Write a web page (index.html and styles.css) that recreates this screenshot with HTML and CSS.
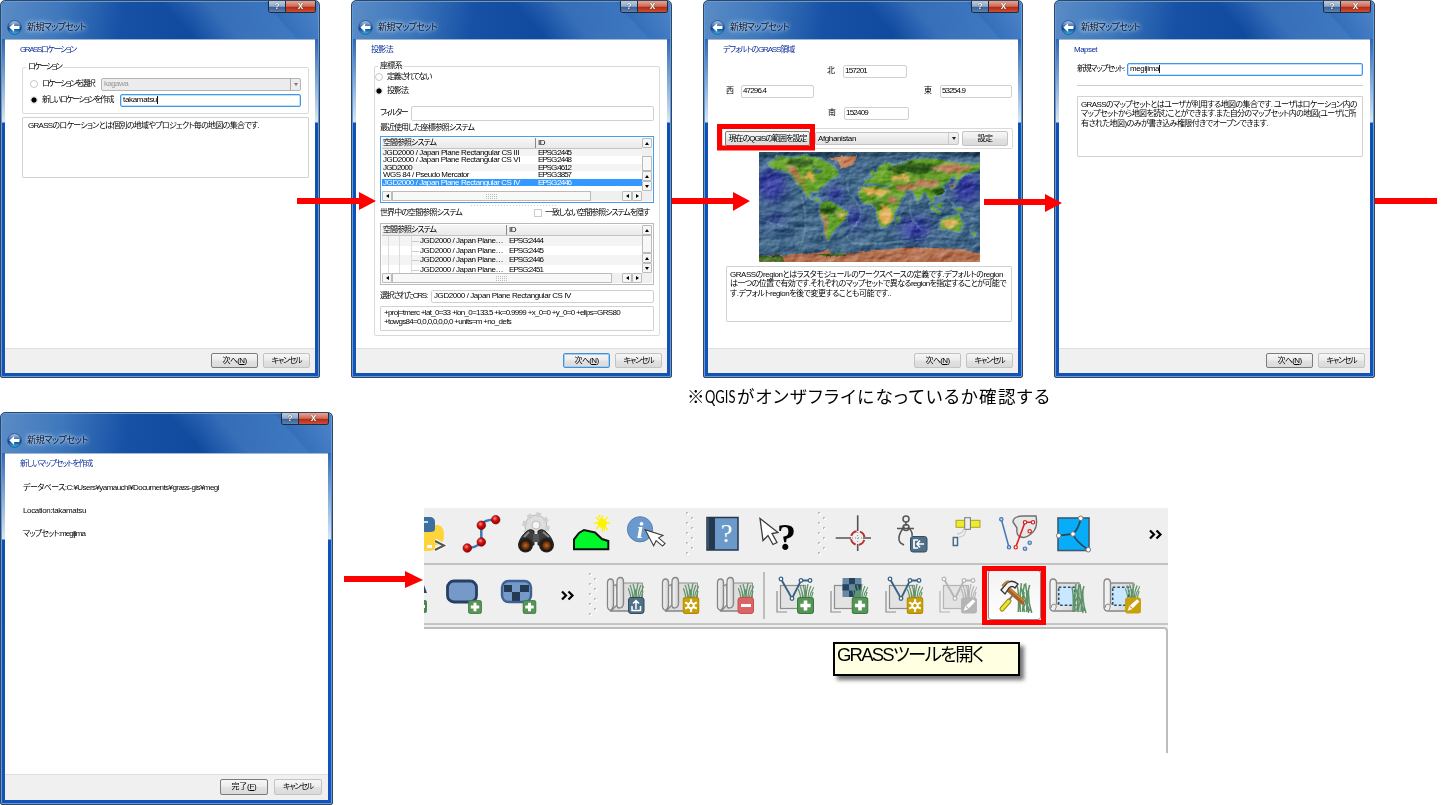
FILE: index.html
```html
<!DOCTYPE html>
<html lang="ja">
<head>
<meta charset="utf-8">
<title>新規マップセット</title>
<link rel="stylesheet" href="styles.css">
</head>
<body>
<svg class="defs" width="0" height="0">
  <defs>
    <linearGradient id="orb" x1="0" y1="0" x2="0" y2="1"><stop offset="0" stop-color="#b9cfe8"/><stop offset=".45" stop-color="#2a62ae"/><stop offset=".55" stop-color="#0b3c8e"/><stop offset="1" stop-color="#35c0ee"/></linearGradient>
    <linearGradient id="paper" x1="0" y1="0" x2="1" y2="0"><stop offset="0" stop-color="#f4f4f4"/><stop offset="1" stop-color="#d2d2d2"/></linearGradient>
    <radialGradient id="ball" cx=".4" cy=".35" r=".7"><stop offset="0" stop-color="#f88"/><stop offset=".45" stop-color="#d20c0c"/><stop offset="1" stop-color="#8a0000"/></radialGradient>
    <radialGradient id="lens"><stop offset="0" stop-color="#b86a25"/><stop offset=".55" stop-color="#7a3508"/><stop offset="1" stop-color="#111"/></radialGradient>
    <symbol id="back" viewBox="0 0 16 16"><circle cx="8" cy="8" r="7.3" fill="url(#orb)" stroke="#173f7c" stroke-width=".7"/><path d="M2.5 8 7.6 3.200V6.400H13.300V9.600H7.600V12.800Z" fill="#fff"/></symbol>
    <symbol id="grass" viewBox="0 0 16 16"><path d="M3 16Q2 8 0 5M5 16Q4 6 2 2M7 16Q7 6 5 1M8 16Q8 8 10 0M10 16Q10 8 13 2M11 16Q12 9 16 3M13 16Q14 11 15 8M6 16L4 8M9 16L7 6" fill="none" stroke="currentColor" stroke-width="1.2"/></symbol>
    <symbol id="reeds" viewBox="0 0 16 30"><path d="M2 29Q3 12 1 4M4 29Q3 14 5 1M6 29Q8 14 5 6M8 29Q5 15 8 2M10 29Q11 14 9 1M12 30Q9 14 13 3M15 30Q11 18 12 6M2 24L8 10M6 28L12 12M13 28L7 12" fill="none" stroke="#5e9367" stroke-width="1.5"/></symbol>
    <symbol id="plus" viewBox="0 0 16 16"><rect x=".5" y=".5" width="15" height="15" rx="2.5" fill="#569556" stroke="#3b7a3e"/><path d="M8 3.2V12.8M3.2 8H12.8" stroke="#fff" stroke-width="3.4"/></symbol>
    <symbol id="spark" viewBox="0 0 16 16"><rect x=".5" y=".5" width="15" height="15" rx="2.5" fill="#c9a00a" stroke="#b08a00"/><path d="M8 2V14M2.5 5 13.5 11M13.5 5 2.5 11" stroke="#fff" stroke-width="2"/><circle cx="8" cy="8" r="3.4" fill="#fff"/><circle cx="8" cy="8" r="1.6" fill="#c9a00a"/></symbol>
    <symbol id="pencil" viewBox="0 0 16 16"><rect x=".5" y=".5" width="15" height="15" rx="2.5" fill="currentColor"/><path d="M3 13 4.5 8.8 11.8 2 14 4.2 7 11.5Z" fill="#fff"/><path d="M5 8.5 7.5 11" stroke="currentColor"/></symbol>
    <symbol id="scroll" viewBox="0 0 40 40"><path d="M15 8H37.5V34H12Z" fill="#ddd" stroke="#8d8d8d"/><path d="M2.5 8Q2.500 4 5.500 4Q8.500 4 8.500 8V29Q9 32 6 35.500Q3 35 2.500 32Z" fill="url(#paper)" stroke="#858585" stroke-width="1.300"/><path d="M8.500 11 12 9V30L6 36H24L27 31" fill="#dedede" stroke="#858585" stroke-width="1.300"/><path d="M12 7Q12 2.500 15.500 2.500Q18.500 2.500 18.500 7V29Q18 33 14 33Q12 33 12 30Z" fill="url(#paper)" stroke="#858585" stroke-width="1.300"/></symbol>
    <symbol id="layers" viewBox="0 0 40 40"><path d="M2 16V37H12" fill="none" stroke="currentColor" stroke-width="1.200"/><rect x="5.500" y="10.500" width="25" height="23" fill="#e3e3e3" stroke="currentColor" stroke-width="1.200"/></symbol>
    <symbol id="vee" viewBox="0 0 40 40"><path d="M6 4 17 23.500 26 5.500H35" fill="none" stroke="currentColor" stroke-width="1.900"/><g fill="#fff" stroke="currentColor" stroke-width="1.300"><circle cx="6" cy="4" r="1.800"/><circle cx="17" cy="23.500" r="1.800"/><circle cx="26" cy="5.500" r="1.800"/><circle cx="35" cy="5.500" r="1.800"/></g></symbol>
    <symbol id="region" viewBox="0 0 40 40"><path d="M8 8H31V33H8Z" fill="#dedede" stroke="#8d8d8d" stroke-width="1.300"/><path d="M2 8Q2 4 5 4Q8.500 4 8.500 8V29L30 30V33L26 36H6Q2 36 2 32Z" fill="url(#paper)" stroke="#858585" stroke-width="1.300"/><path d="M3 33Q3 29 6 29Q10 30 7 35" fill="none" stroke="#858585"/><rect x="10.700" y="12.300" width="16" height="18" fill="#c9e7ff" stroke="#244f70" stroke-width="1.600" stroke-dasharray="2.600 2"/></symbol>
    <symbol id="grip" viewBox="0 0 10 48"><path d="M1 2h3l-3 3zM6 7h3l-3 3zM1 12h3l-3 3zM6 17h3l-3 3zM1 22h3l-3 3zM6 27h3l-3 3zM1 32h3l-3 3zM6 37h3l-3 3zM1 42h3l-3 3z" fill="#bdbdbd"/><path d="M4 2v3h-3zM9 7v3h-3zM4 12v3h-3zM9 17v3h-3zM4 22v3h-3zM9 27v3h-3zM4 32v3h-3zM9 37v3h-3zM4 42v3h-3z" fill="#fff"/></symbol>
    <symbol id="cursor" viewBox="0 0 20 28"><path d="M1 1 4 23 9 18 14 27 18 25 13 16 19 15Z" fill="#fff" stroke="#3a3a3a" stroke-width="1.300"/></symbol>
    <symbol id="more" viewBox="0 0 14 12"><path d="M1 1.500 5 5.500 1 9.500M7.500 1.500 11.500 5.500 7.500 9.500" fill="none" stroke="#000" stroke-width="2.200"/></symbol>
  </defs>
</svg>

<main class="canvas">

<section class="win win-a">
  <div class="controls"><b class="help">?</b><b class="close">x</b></div>
  <header><svg class="orb"><use href="#back"/></svg><span class="t cap" data-w="59">新規マップセット</span></header>
  <div class="body">
    <div class="heading"><span class="t" data-w="56">GRASSロケーション</span></div>
    <div class="group ga">
      <span class="legend"><span class="t" data-w="33">ロケーション</span></span>
      <div class="opt"><i class="radio off"></i><span class="t" data-w="52">ロケーションを選択</span><div class="combo disabled"><span class="t" data-w="24">kagawa</span><i class="drop"></i></div></div>
      <div class="opt"><i class="radio on"></i><span class="t" data-w="71">新しいロケーションを作成</span><div class="field focus new"><span class="t caret" data-w="34">takamatsu</span></div></div>
    </div>
    <div class="note na"><span class="t" data-w="231">GRASSのロケーションとは個別の地域やプロジェクト毎の地図の集合です.</span></div>
  </div>
  <footer><button class="btn dark"><span class="t" data-w="24">次へ(<u>N</u>)</span></button><button class="btn"><span class="t" data-w="30">キャンセル</span></button></footer>
</section>

<section class="win win-b">
  <div class="controls"><b class="help">?</b><b class="close">x</b></div>
  <header><svg class="orb"><use href="#back"/></svg><span class="t cap" data-w="59">新規マップセット</span></header>
  <div class="body">
    <div class="heading"><span class="t" data-w="22">投影法</span></div>
    <div class="group gb">
      <span class="legend"><span class="t" data-w="22">座標系</span></span>
      <div class="opt"><i class="radio off"></i><span class="t" data-w="44">定義されてない</span></div>
      <div class="opt"><i class="radio on"></i><span class="t" data-w="21">投影法</span></div>
      <div class="line filter"><span class="t" data-w="27">フィルター</span><div class="field"></div></div>
      <div class="line"><span class="t" data-w="94">最近使用した座標参照システム</span></div>
      <div class="table recent">
        <div class="cells">
          <div class="row head"><span class="t" data-w="53">空間参照システム</span><span class="t" data-w="7">ID</span></div>
          <div class="row alt"><span class="t" data-w="136">JGD2000 / Japan Plane Rectangular CS III</span><span class="t" data-w="33">EPSG:2445</span></div>
          <div class="row"><span class="t" data-w="137">JGD2000 / Japan Plane Rectangular CS VI</span><span class="t" data-w="33">EPSG:2448</span></div>
          <div class="row alt"><span class="t" data-w="29">JGD2000</span><span class="t" data-w="33">EPSG:4612</span></div>
          <div class="row"><span class="t" data-w="86">WGS 84 / Pseudo Mercator</span><span class="t" data-w="33">EPSG:3857</span></div>
          <div class="row sel"><span class="t" data-w="137">JGD2000 / Japan Plane Rectangular CS IV</span><span class="t" data-w="33">EPSG:2446</span></div>
        </div>
        <div class="vbar"><i class="sb up"></i><i class="gap"></i><i class="thumb"></i><i class="sb up"></i><i class="sb down"></i></div>
        <div class="hbar"><i class="sb left"></i><i class="thumb"></i><i class="gap"></i><i class="sb left"></i><i class="sb right"></i></div>
      </div>
      <div class="splitter"></div>
      <div class="line hide"><span class="t" data-w="82">世界中の空間参照システム</span><i class="check"></i><span class="t" data-w="104">一致しない空間参照システムを隠す</span></div>
      <div class="table world">
        <div class="cells">
          <div class="row head"><span class="t" data-w="53">空間参照システム</span><span class="t" data-w="7">ID</span></div>
          <div class="row alt tree"><span class="t" data-w="83">JGD2000 / Japan Plane…</span><span class="t" data-w="34">EPSG:2444</span></div>
          <div class="row tree"><span class="t" data-w="83">JGD2000 / Japan Plane…</span><span class="t" data-w="34">EPSG:2445</span></div>
          <div class="row alt tree"><span class="t" data-w="83">JGD2000 / Japan Plane…</span><span class="t" data-w="34">EPSG:2446</span></div>
          <div class="row tree"><span class="t" data-w="83">JGD2000 / Japan Plane…</span><span class="t" data-w="34">EPSG:2451</span></div>
        </div>
        <div class="vbar"><i class="sb up"></i><i class="thumb"></i><i class="sb up"></i><i class="sb down"></i></div>
        <div class="hbar"><i class="sb left"></i><i class="thumb"></i><i class="gap"></i><i class="sb left"></i><i class="sb right"></i></div>
      </div>
      <div class="line crs"><span class="t" data-w="47">選択されたCRS:</span><div class="field"><span class="t" data-w="137">JGD2000 / Japan Plane Rectangular CS IV</span></div></div>
      <div class="note nb"><span class="t" data-w="236">+proj=tmerc +lat_0=33 +lon_0=133.5 +k=0.9999 +x_0=0 +y_0=0 +ellps=GRS80</span><span class="t" data-w="127">+towgs84=0,0,0,0,0,0,0 +units=m +no_defs</span></div>
    </div>
  </div>
  <footer><button class="btn blue"><span class="t" data-w="24">次へ(<u>N</u>)</span></button><button class="btn"><span class="t" data-w="30">キャンセル</span></button></footer>
</section>

<section class="win win-c">
  <div class="controls"><b class="help">?</b><b class="close">x</b></div>
  <header><svg class="orb"><use href="#back"/></svg><span class="t cap" data-w="59">新規マップセット</span></header>
  <div class="body">
    <div class="heading"><span class="t" data-w="71">デフォルトのGRASS領域</span></div>
    <div class="compass north"><span>北</span><div class="field"><span class="t" data-w="22">157201</span></div></div>
    <div class="compass west"><span>西</span><div class="field"><span class="t" data-w="23">47296.4</span></div><span>東</span><div class="field"><span class="t" data-w="23">53254.9</span></div></div>
    <div class="compass south"><span>南</span><div class="field"><span class="t" data-w="22">152409</span></div></div>
    <div class="group gc">
      <button class="btn dark wide"><span class="t" data-w="78">現在のQGISの範囲を設定</span></button>
      <div class="combo"><span class="t" data-w="38">Afghanistan</span><i class="drop"></i></div>
      <button class="btn"><span class="t" data-w="15">設定</span></button>
    </div>
    <svg class="map" viewBox="193 97 662 329" preserveAspectRatio="none">
      <defs>
        <filter id="relief" x="0" y="0" width="1" height="1" color-interpolation-filters="sRGB"><feTurbulence type="fractalNoise" baseFrequency=".018 .03" numOctaves="4" seed="8"/><feDiffuseLighting surfaceScale="7" lighting-color="#fff"><feDistantLight azimuth="225" elevation="36"/></feDiffuseLighting></filter>
        <filter id="edge"><feTurbulence type="fractalNoise" baseFrequency=".07" numOctaves="2" seed="3" result="n"/><feDisplacementMap in="SourceGraphic" in2="n" scale="9" xChannelSelector="R" yChannelSelector="G"/></filter>
        <filter id="soft"><feTurbulence type="fractalNoise" baseFrequency=".06" numOctaves="2" seed="5" result="n"/><feDisplacementMap in="SourceGraphic" in2="n" scale="30" xChannelSelector="R" yChannelSelector="G"/><feGaussianBlur stdDeviation="2.500"/></filter>
        <filter id="haze" x="-.2" y="-.2" width="1.400" height="1.400"><feGaussianBlur stdDeviation="16"/></filter>
        <clipPath id="land"><path id="landpath" d="M222 130 250 112 290 115 330 108 370 115 400 130 425 150 430 168 400 182 385 200 370 205 368 222 350 213 342 225 352 236 365 232 380 250 362 242 335 227 320 205 300 180 285 160 260 150 235 150ZM378 252 400 243 430 258 460 277 452 300 432 315 415 335 402 360 390 352 388 310 374 275ZM497 205 530 197 560 200 590 208 603 238 622 238 602 270 597 295 580 318 560 323 548 300 545 265 530 252 505 248 493 230ZM510 192 512 180 530 176 545 158 556 138 575 128 600 138 660 118 720 118 790 130 853 133 855 148 805 165 790 185 775 168 758 188 742 195 750 215 730 228 715 230 715 252 700 232 688 215 668 246 655 215 638 210 626 232 605 238 588 208 580 195 560 198 540 190ZM737 302 760 290 772 293 790 283 803 312 795 335 770 330 735 325ZM604 296 614 288 612 304 605 308ZM527 152 534 150 538 166 530 168ZM768 200 780 190 786 178 790 182 782 196 772 206ZM703 248 720 268 735 276 732 280 712 270ZM725 250 742 248 742 264 728 262ZM772 260 800 265 812 276 790 274ZM830 335 846 340 835 352Z"/></clipPath>
      </defs>
      <rect x="193" y="97" width="662" height="329" fill="#375c7e"/>
      <g filter="url(#haze)" fill="#2a2c9c" opacity=".85"><ellipse cx="230" cy="195" rx="45" ry="50"/><ellipse cx="420" cy="225" rx="28" ry="25"/><ellipse cx="480" cy="295" rx="22" ry="35"/><ellipse cx="815" cy="205" rx="42" ry="48"/><ellipse cx="660" cy="325" rx="45" ry="35"/><ellipse cx="240" cy="300" rx="40" ry="25" opacity=".5"/></g>
      <g filter="url(#edge)" fill="none" stroke="#6796ae" stroke-width="6" opacity=".4"><path d="M470 150Q440 200 480 240T470 330 560 370 700 350 810 360M650 230Q630 290 680 330M320 230Q350 320 310 390M193 300Q280 330 380 330M755 230Q800 290 850 300"/></g>
      <path d="M193 97H855V108Q700 100 500 112T193 108Z" fill="#26475c" filter="url(#edge)"/>
      <use href="#landpath" fill="none" stroke="#5a8ca5" stroke-width="10" filter="url(#edge)" opacity=".6"/>
      <g filter="url(#edge)"><use href="#landpath" fill="#5b9a24"/>
        <g clip-path="url(#land)"><g filter="url(#soft)">
          <g fill="#255314"><ellipse cx="320" cy="130" rx="40" ry="12"/><ellipse cx="405" cy="270" rx="24" ry="16"/><ellipse cx="660" cy="145" rx="85" ry="17"/><ellipse cx="550" cy="250" rx="20" ry="7"/><ellipse cx="735" cy="215" rx="20" ry="12"/></g>
          <g fill="#e0a850"><ellipse cx="345" cy="170" rx="17" ry="12"/><ellipse cx="545" cy="215" rx="45" ry="8"/><ellipse cx="575" cy="285" rx="18" ry="32"/><ellipse cx="440" cy="288" rx="13" ry="10"/><ellipse cx="765" cy="310" rx="25" ry="9"/><ellipse cx="620" cy="175" rx="32" ry="8"/></g>
          <g fill="#b27250"><path d="M270 130 305 150 340 220 315 195 285 160ZM378 270 395 300 397 357 386 355Z"/><ellipse cx="688" cy="192" rx="42" ry="14"/><ellipse cx="630" cy="202" rx="32" ry="10"/><ellipse cx="770" cy="145" rx="60" ry="12"/><ellipse cx="593" cy="237" rx="11" ry="13"/></g>
        </g></g>
        <path d="M398 118 440 110 487 110 478 130 455 143 440 147 430 125Z" fill="#c07a55"/>
        <path d="M193 408 290 403 380 398 400 385 410 402 480 400 550 390 640 383 720 384 800 387 860 403V430H190Z" fill="#ad6846"/><path d="M193 408 260 408 270 425H193ZM365 403 440 400 460 407 390 408Z" fill="#375d1c"/>
      </g>
      <ellipse cx="368" cy="153" rx="13" ry="8" fill="#466f85" filter="url(#edge)"/>
      <rect class="shade" x="193" y="97" width="662" height="329" filter="url(#relief)"/>
      <rect x="769" y="196" width="6" height="6" fill="red"/>
    </svg>
    <div class="note nc"><span class="t" data-w="273">GRASSのregionとはラスタモジュールのワークスペースの定義です.デフォルトのregion</span><span class="t" data-w="276">は一つの位置で有効です.それぞれのマップセットで異なるregionを指定することが可能で</span><span class="t" data-w="161">す.デフォルトregionを後で変更することも可能です..</span></div>
  </div>
  <footer><button class="btn"><span class="t" data-w="24">次へ(<u>N</u>)</span></button><button class="btn"><span class="t" data-w="30">キャンセル</span></button></footer>
</section>

<section class="win win-d">
  <div class="controls"><b class="help">?</b><b class="close">x</b></div>
  <header><svg class="orb"><use href="#back"/></svg><span class="t cap" data-w="59">新規マップセット</span></header>
  <div class="body">
    <div class="heading"><span class="t" data-w="23">Mapset</span></div>
    <div class="mapset"><span class="t" data-w="47">新規マップセット:</span><div class="field focus"><span class="t caret" data-w="29">megijima</span></div></div>
    <div class="rule"></div>
    <div class="note nd"><span class="t" data-w="276">GRASSのマップセットとはユーザが利用する地図の集合です. ユーザはロケーション内の</span><span class="t" data-w="275">マップセットから地図を読むことができます.また自分のマップセット内の地図(ユーザに所</span><span class="t" data-w="187">有された地図)のみが書き込み権限付きでオープンできます.</span></div>
  </div>
  <footer><button class="btn dark"><span class="t" data-w="24">次へ(<u>N</u>)</span></button><button class="btn"><span class="t" data-w="30">キャンセル</span></button></footer>
</section>

<section class="win win-e">
  <div class="controls"><b class="help">?</b><b class="close">x</b></div>
  <header><svg class="orb"><use href="#back"/></svg><span class="t cap" data-w="61">新規マップセット</span></header>
  <div class="body">
    <div class="heading"><span class="t" data-w="72">新しいマップセットを作成</span></div>
    <div class="summary"><span class="t" data-w="196">データベース:C:¥Users¥yamauchi¥Documents¥grass-gis¥megi</span></div>
    <div class="summary"><span class="t" data-w="63">Location:takamatsu</span></div>
    <div class="summary"><span class="t" data-w="62">マップセット:megijima</span></div>
  </div>
  <footer><button class="btn dark"><span class="t" data-w="25">完了(<u>F</u>)</span></button><button class="btn"><span class="t" data-w="30">キャンセル</span></button></footer>
</section>

<p class="remark"><span class="t" data-w="18">※</span><span class="latin">QGIS</span><span class="t" data-w="314">がオンザフライになっているか確認する</span></p>

<section class="qgis">
  <div class="bar bar1">
    <svg class="ic cut" viewBox="0 0 31 40"><path d="M0 11H14Q20 12 20 21Q20 31 14 31H11V35Q10 37 0 37Z" fill="#ffd43b"/><path d="M0 3H7Q11 4 11 8V15Q11 18 6 18H0Z" fill="#3a6f9f"/><path d="M0 8H4" stroke="#fff" stroke-width="1.500"/><rect x="3" y="31" width="5" height="3" fill="#fff"/><path d="M11 26.500 20 31.500 11 36.500" fill="none" stroke="#fff" stroke-width="4"/><path d="M11 27 20 31.500 11 36" fill="none" stroke="#555" stroke-width="2"/></svg>
    <svg class="ic" viewBox="0 0 40 40"><path d="M5.300 34Q14 34 19.300 28V11.300Q22 5 33.700 5.700" fill="none" stroke="#3d78bd" stroke-width="2.500"/><g fill="url(#ball)" stroke="#700" stroke-width=".6"><circle cx="5.300" cy="34" r="4.300"/><circle cx="19.300" cy="28" r="4.300"/><circle cx="19.300" cy="11.300" r="4.300"/><circle cx="33.700" cy="5.700" r="4.300"/></g></svg>
    <svg class="ic" viewBox="0 0 40 40"><circle cx="20" cy="12" r="11" fill="#dedede" stroke="#bbb"/><circle cx="20" cy="12" r="11.500" fill="none" stroke="#d0d0d0" stroke-width="4.500" stroke-dasharray="4.600 4.400"/><circle cx="20" cy="11" r="4" fill="#f5f5f5" stroke="#bbb"/><path d="M10 18Q14 14 18 17V31H3Q3 24 10 18ZM30 18Q26 14 22 17V31H37Q37 24 30 18Z" fill="#3d3d3d" stroke="#222"/><path d="M17 20H23V28H17Z" fill="#555"/><path d="M8 23 13 18M27 18 33 23" stroke="#888" stroke-width="2"/><circle cx="9.500" cy="31" r="7.500" fill="#222"/><circle cx="30.500" cy="31" r="7.500" fill="#222"/><circle cx="9.500" cy="31.500" r="5.500" fill="url(#lens)"/><circle cx="30.500" cy="31.500" r="5.500" fill="url(#lens)"/></svg>
    <svg class="ic" viewBox="0 0 40 40"><path d="M3 35.300V25.300L8 19 13 16 24 18.500 31 25 37.300 27V35.300Z" fill="#00f72a" stroke="#111" stroke-width="2"/><circle cx="31.300" cy="9.300" r="4.500" fill="#fff200"/><path d="M31.300 1V18M23 9H39M25 3 37 16M37 3 25 15M28 1 34 17" stroke="#fff200" stroke-width="1.300"/></svg>
    <svg class="ic" viewBox="0 0 40 40"><circle cx="15" cy="15.300" r="12.600" fill="#6a99cd" stroke="#5582b5"/><text x="15" y="23.500" text-anchor="middle" class="info">i</text><use href="#cursor" x="18" y="15" width="20" height="23" transform="rotate(-20 20 17)"/></svg>
    <svg class="grip"><use href="#grip"/></svg>
    <svg class="ic" viewBox="0 0 40 40"><rect x="5" y="3.500" width="31" height="32.500" fill="#6b9aca" stroke="#24394d" stroke-width="1.500"/><rect x="5" y="3.500" width="8" height="32.500" fill="#24394d"/><path d="M6 4V35" stroke="#486887"/><text x="24.500" y="27.500" text-anchor="middle" class="bookq">?</text></svg>
    <svg class="ic" viewBox="0 0 40 40"><use href="#cursor" x="2" y="3" width="20" height="29"/><text x="29.500" y="36" text-anchor="middle" class="bigq">?</text></svg>
    <svg class="grip"><use href="#grip"/></svg>
    <svg class="ic" viewBox="0 0 40 40"><path d="M1.700 24H17M29 24H37M23.700 1.300V17M23.700 30V37" stroke="#555" stroke-width="1.600"/><path d="M18 24H30M23.700 18V30" stroke="#888" stroke-dasharray="1 2"/><circle cx="23.700" cy="24" r="6.800" fill="none" stroke="#b73434" stroke-width="2" stroke-dasharray="7.300 3.400" stroke-dashoffset="-2"/></svg>
    <svg class="ic" viewBox="0 0 40 40"><g fill="none" stroke="#555" stroke-width="1.500"><circle cx="14" cy="5" r="3"/><path d="M14 8V12M5 14.500H22M12.500 12.500Q4 23 8.500 29L12 31M16 13Q21 18 20 22"/><circle cx="14" cy="13.500" r="3"/></g><rect x="18.500" y="22.500" width="16.500" height="15.500" rx="2.500" fill="#4f7088" stroke="#334b5d"/><path d="M26 26H22V34H26M32 30H25M28 26.500 25 30 28 33.500" fill="none" stroke="#fff" stroke-width="1.700"/></svg>
    <svg class="ic" viewBox="0 0 40 40"><rect x="9" y="6.300" width="24" height="7" fill="#ecec2a" stroke="#aaa32e"/><rect x="17.700" y="3.700" width="5.700" height="11.600" fill="#eee" stroke="#777"/><path d="M17 14Q16 20 10 20M19 16Q18 23 12 23" fill="none" stroke="#ccc" stroke-width="1.300"/><rect x="6.300" y="23.500" width="4.200" height="8" fill="#eef4f8" stroke="#456d88" stroke-width="1.500"/></svg>
    <svg class="ic" viewBox="0 0 40 40"><path d="M14 8Q14 2 25 2H37Q39 13 34 18Q27 25 22 23Q17 22 18 14Z" fill="#e7e7e7" stroke="#6e6e6e" stroke-width="1.400"/><path d="M2.300 5.300 10 33.300" stroke="#4677b5" stroke-width="1.500"/><path d="M16.700 33.300 26 8.300H34" fill="none" stroke="#dd2020" stroke-width="1.600"/><g fill="#fff" stroke="#dd2020" stroke-width="1.200"><circle cx="16.700" cy="33.300" r="1.700"/><circle cx="26" cy="8.300" r="1.700"/><circle cx="34" cy="8.300" r="1.700"/><circle cx="30.700" cy="17.300" r="1.700"/></g><g fill="#bdd4f2" stroke="#4677b5" stroke-width="1.200"><circle cx="2.300" cy="5.300" r="1.700"/><circle cx="10" cy="33.300" r="1.700"/><circle cx="30.700" cy="28.700" r="1.700"/><circle cx="26" cy="34.700" r="1.700"/></g></svg>
    <svg class="ic" viewBox="0 0 40 40"><rect x="4" y="4" width="31" height="32.500" fill="#08adfa" stroke="#3d5a72" stroke-width="1.600"/><path d="M26.700 4.300Q25 14 19 20L4.700 21.700M19 20Q22 28 34.300 35.700" fill="none" stroke="#26475e" stroke-width="1.800"/><g fill="#fff" stroke="#777"><circle cx="26.700" cy="4.300" r="2.300"/><circle cx="19" cy="20" r="2.300"/><circle cx="4.700" cy="21.700" r="2.300"/><circle cx="34.300" cy="35.700" r="2.300"/></g></svg>
    <svg class="more end"><use href="#more"/></svg>
  </div>
  <div class="bar bar2">
    <svg class="ic cut" viewBox="0 0 14 40"><path d="M0 10 3 18H0Z" fill="#27476b"/><path d="M0 25H1Q3 25 3 28V36Q3 38 0 38Z" fill="#4a884c"/><path d="M0 31.500H1" stroke="#fff" stroke-width="3"/></svg>
    <svg class="ic" viewBox="0 0 40 40"><rect x="3.500" y="6" width="29" height="21" rx="6.500" fill="#7599c9" stroke="#263f63" stroke-width="2.800"/><use href="#plus" x="24" y="25" width="14" height="14"/></svg>
    <svg class="ic" viewBox="0 0 40 40"><rect x="4" y="6" width="29" height="21" rx="6.500" fill="#7599c9"/><path d="M6 10H14V17H6ZM22 10H31V17H22ZM14 17H22V26H14Z" fill="#243954"/><rect x="4" y="6" width="29" height="21" rx="6.500" fill="none" stroke="#3d6193" stroke-width="2.400"/><use href="#plus" x="24.500" y="25" width="14" height="14"/></svg>
    <svg class="more"><use href="#more"/></svg>
    <svg class="grip"><use href="#grip"/></svg>
    <svg class="ic green" viewBox="0 0 40 40"><use href="#scroll"/><use href="#grass" x="23" y="8" width="16" height="16"/><rect x="23.500" y="22.500" width="15.500" height="16" rx="2.500" fill="#4f7088" stroke="#334b5d"/><path d="M31 34V26M28 28.500 31 25.500 34 28.500M27 31V35.500H35.500V31" fill="none" stroke="#fff" stroke-width="1.500"/></svg>
    <svg class="ic green" viewBox="0 0 40 40"><use href="#scroll"/><use href="#grass" x="23" y="8" width="16" height="16"/><use href="#spark" x="22.500" y="22" width="17" height="17"/></svg>
    <svg class="ic green" viewBox="0 0 40 40"><use href="#scroll"/><use href="#grass" x="23" y="8" width="16" height="16"/><rect x="23" y="22.500" width="15.500" height="16" rx="2.500" fill="#db6464" stroke="#c85050"/><path d="M26 30.500H36" stroke="#fff" stroke-width="3"/></svg>
    <i class="vsep"></i>
    <svg class="ic green" viewBox="0 0 40 40"><use href="#layers" class="grey"/><use href="#vee" class="steel"/><use href="#grass" x="23" y="9" width="16" height="16"/><use href="#plus" x="22" y="22" width="17" height="17"/></svg>
    <svg class="ic green" viewBox="0 0 40 40"><use href="#layers" class="grey"/><rect x="13.500" y="3" width="19" height="19" fill="#6788a5"/><path d="M13.500 9.300H20V3H26V9.300H32.500V15.600H26V22H20V15.600H26V9.300H20V15.600H13.500Z" fill="#25425e"/><use href="#grass" x="23" y="9" width="16" height="16"/><use href="#plus" x="22.500" y="22" width="17" height="17"/></svg>
    <svg class="ic green" viewBox="0 0 40 40"><use href="#layers" class="grey"/><use href="#vee" class="steel"/><use href="#grass" x="23" y="9" width="16" height="16"/><use href="#spark" x="22.500" y="22" width="17" height="17"/></svg>
    <svg class="ic faded" viewBox="0 0 40 40"><use href="#layers"/><use href="#vee"/><use href="#grass" x="23" y="9" width="16" height="16"/><use href="#pencil" x="22.500" y="22" width="17" height="17"/></svg>
    <span class="active"><svg class="ic" viewBox="0 0 40 40"><use href="#reeds" x="22" y="7" width="17" height="31"/><path d="M14 14 30 28" stroke="#a76323" stroke-width="5"/><path d="M15 13 30 26" stroke="#d08b3b" stroke-width="1.500"/><path d="M8 34 15 26" stroke="#8e8b20" stroke-width="5" stroke-linecap="round"/><path d="M8 34 15 26" stroke="#eee52b" stroke-width="3" stroke-linecap="round"/><path d="M15 25 19 20" stroke="#777" stroke-width="2"/><path d="M7 15 13 8Q18 4 24 9L21 13Q18 10 15 13L11 19Z" fill="#f3f3f3" stroke="#333" stroke-width="1.300"/><path d="M8 11 12 7 15 6" stroke="#b78040" stroke-width="2" fill="none"/></svg></span>
    <svg class="ic" viewBox="0 0 40 40"><use href="#region"/><use href="#reeds" x="23" y="7" width="16" height="32"/></svg>
    <svg class="ic gold" viewBox="0 0 40 40"><use href="#region"/><use href="#grass" x="23" y="8" width="15" height="16" class="blades"/><use href="#pencil" x="22.500" y="22" width="17" height="17"/></svg>
  </div>
  <div class="view"></div>
</section>

<svg class="overlay" viewBox="0 0 1441 805">
  <g fill="#fe0000">
    <path d="M297 198H359V192L376 201 359 210V204H297Z"/>
    <path d="M672 198H733V192L750 201 733 211V204H672Z"/>
    <path d="M984 199H1045V194L1062 203 1045 212V205H984Z"/>
    <path d="M1375 198H1437V204H1375Z"/>
    <path d="M344 576H405V571L423 580 405 588V582H344Z"/>
  </g>
  <rect x="719.500" y="126.500" width="93" height="21.500" fill="none" stroke="#fe0000" stroke-width="5"/>
  <rect x="984.500" y="568.500" width="59" height="54" fill="none" stroke="#fe0000" stroke-width="5"/>
</svg>
<div class="tooltip"><span class="t" data-w="146">GRASSツールを開く</span></div>
</main>
<script src="fit.js"></script>
</body>
</html>
```
FILE: styles.css
```css
* { box-sizing: border-box; }
body { margin: 0; background: #fff; font: 8px/1 "Liberation Sans", "Noto Sans CJK JP", sans-serif; color: #000; }
.defs { position: absolute; }
.canvas { position: relative; width: 1441px; height: 805px; overflow: hidden; }
.t { display: inline-block; white-space: pre; flex: none; font-feature-settings: "palt"; }
i { display: block; flex: none; font-style: normal; }

/* dialog windows */
.win { position: absolute; top: 0; width: 321px; height: 378px; padding: 0 4px 4px; display: flex; flex-direction: column;
  border: 1px solid #35465c; border-radius: 5px 5px 2px 2px;
  box-shadow: inset 0 0 0 1px #5f9be0;
  background: linear-gradient(180deg, #3b74bb 0, #2e68b4 38px, #8fb1da 85px, #d9e5f3 121px, #0d50b6 122px, #1353b7 100%); }
.win-a { left: 0; width: 320px; }
.win-b { left: 351px; }
.win-c { left: 703px; width: 320px; }
.win-d { left: 1054px; }
.win-e { left: 0; top: 412px; width: 333px; height: 393px; background: linear-gradient(180deg, #3b74bb 0, #2e68b4 38px, #8fb1da 88px, #d9e5f3 126px, #0d50b6 127px, #1353b7 100%); }
.win header { height: 37px; flex: none; margin: 1px -3px 0; padding: 13px 0 0 5px; display: flex; align-items: center; gap: 5px; border-radius: 4px 4px 0 0;
  background: linear-gradient(48deg, transparent 55%, rgba(105,155,215,.4) 68%, rgba(90,145,210,.5) 84%, rgba(90,145,210,.35) 85%, rgba(120,165,220,.5)), linear-gradient(100deg, #5a8cc6 0, #3f78bc 18%, #1751a6 38%, #0f4a9f 60%, #2765b4 100%); }
.win-e header { height: 39px; padding-top: 14px; }
.orb { width: 15px; height: 15px; }
.cap { font-size: 9px; color: #0b1526; text-shadow: 0 0 4px #b9d2ee, 0 0 6px #b9d2ee, 0 0 3px #b9d2ee; }
.controls { position: absolute; top: 0; right: 3px; display: flex; height: 12px; border: 1px solid #1c2c44; border-top: 0; border-radius: 0 0 3px 3px; overflow: hidden; color: #fff; }
.controls b { height: 12px; font-size: 9px; line-height: 11px; text-align: center; text-shadow: 0 0 1px #000; }
.win .close { font-size: 10px; line-height: 9px; }
.help { width: 17px; background: linear-gradient(#bccbe0 0, #8fa8c8 45%, #3b5f91 50%, #6688b5); border-right: 1px solid #1c2c44; }
.close { width: 29px; background: linear-gradient(#e3a697 0, #cf6a56 45%, #b22814 50%, #d2573a); }
.body { flex: 1; min-height: 0; background: #fff; border-top: 1px solid #9db9d8; display: flex; flex-direction: column; }
.heading { height: 19px; flex: none; display: flex; align-items: center; padding-left: 15px; color: #0a2c98; }
footer { height: 25px; flex: none; background: #f0f0f0; border-top: 1px solid #dfdfdf; display: flex; justify-content: flex-end; gap: 5px; padding: 4px 5px 0 0; }
.win-e footer { height: 26px; gap: 6px; padding-right: 6px; }
.btn { width: 47px; height: 15px; flex: none; padding: 0; border: 1px solid #c3c3c3; border-radius: 2px; display: flex; align-items: center; justify-content: center; font: inherit; color: #000;
  background: linear-gradient(#f6f6f6, #ececec 48%, #e2e2e2 52%, #dadada); }
.btn u { text-underline-offset: 1px; text-decoration-thickness: .5px; }
.btn.dark { border-color: #7c7c7c; }
.btn.blue { border-color: #4a90d0; box-shadow: inset 0 0 0 1px #9fd0f3; }
.win-e .btn { width: 48px; height: 16px; }

/* form parts */
.group { position: relative; width: 287px; flex: none; border: 1px solid #dadada; border-radius: 2px; }
.legend { position: absolute; left: 3px; top: -5px; padding: 0 2px; background: #fff; height: 9px; }
.ga { margin: 8px 0 0 17px; height: 47px; padding-top: 8px; }
.gb { margin: 7px 0 0 18px; width: 286px; height: 270px; padding-top: 3px; }
.opt { height: 16px; display: flex; align-items: center; gap: 4px; padding: 0 7px; }
.gb .opt { height: 14px; padding-left: 0; }
.radio { width: 8px; height: 8px; border: 1px solid #c9c9c9; border-radius: 50%; background: #fff; }
.radio.on { border-color: #e2e2e2; background: radial-gradient(#000 0 2.3px, #fff 3.100px); }
.field, .combo { height: 13px; border: 1px solid #d0d0d0; border-radius: 2px; background: #fff; display: flex; align-items: center; padding-left: 2px; }
.field.focus { border: 1px solid #3e97ea; box-shadow: inset 0 0 0 .5px #8cc4f5; }
.caret { box-shadow: 1px 0 0 #111; }
.combo { background: linear-gradient(#f5f5f5, #e2e2e2); border-color: #c4c4c4; justify-content: space-between; }
.combo.disabled { width: 200px; margin-left: auto; background: #ececec; color: #999; border-color: #b5b5b5; }
.new { width: 181px; margin-left: auto; }
.drop { width: 10px; height: 11px; border-left: 1px solid #ccc; display: grid; place-items: center; }
.drop::before { content: ""; border: 2.500px solid transparent; border-top: 3px solid #222; border-bottom: 0; }
.disabled .drop { border-color: #aaa; }
.disabled .drop::before { border-top-color: #777; }
.note { width: 287px; flex: none; border: 1px solid #d2d2d2; border-radius: 1px; padding: 3px 0 0 5px; display: flex; flex-direction: column; }
.note .t { height: 9.300px; line-height: 9.300px; align-self: flex-start; }
.na { margin: 3px 0 0 17px; height: 61px; }
.line { height: 12px; padding: 0 5px; display: flex; align-items: center; }
.line .field { margin-left: auto; }
.filter { margin-top: 6px; height: 18px; }
.filter .field { width: 243px; height: 15px; }
.hide { padding-right: 10px; }
.crs { margin-top: 4px; height: 14px; }
.crs .field { width: 223px; }
.nb { margin: 3px 0 0 5px; width: 274px; height: 25px; padding-left: 3px; padding-top: 2px; }
.nb .t { height: 8.500px; line-height: 8.500px; }
.check { width: 8px; height: 8px; border: 1px solid #ccc; margin: 0 3px 0 auto; }
.splitter { height: 1px; width: 87px; margin: 2px 0 1px 96px; background: repeating-linear-gradient(90deg, #ccc 0 1px, transparent 1px 3px); }

/* lists */
.table { margin: 2px 0 0 5px; width: 274px; height: 67px; border: 1px solid #bbb; display: grid; grid-template: 1fr 10px / 1fr 10px; padding: 1px; background: #fff; overflow: hidden; }
.recent { border-color: #4b9ce6; height: 67px; }
.world { margin-top: 4px; height: 62px; }
.cells { overflow: hidden; min-height: 0; }
.row { height: 7.400px; display: grid; grid-template-columns: 155px 1fr; align-items: center; padding-left: 1px; }
.row .t { line-height: 7.400px; }
.row.head { height: 11px; border-bottom: 1px solid #c4c4c4; background: linear-gradient(#f7f7f7, #e9e9e9); }
.row.head .t:last-child { border-left: 1px solid #888; padding-left: 2px; margin-left: -3px; height: 10px; line-height: 10px; }
.row.alt { background-color: #f4f4f4; }
.row.sel { background: #3399ff; color: #fff; }
.world .row { grid-template-columns: 126px 1fr; }
.world .row.tree { height: 9.500px; padding-left: 38px; grid-template-columns: 89px 1fr;
  background-image: linear-gradient(#ccc, #ccc), linear-gradient(#ddd, #ddd), linear-gradient(#ddd, #ddd), linear-gradient(#ddd, #ddd);
  background-size: 7px 1px, 1px 100%, 1px 100%, 1px 100%; background-position: 30px 5px, 6px 0, 17px 0, 29px 0; background-repeat: no-repeat; }
.vbar { display: flex; flex-direction: column; background: #f0f0f0; min-height: 0; }
.hbar { grid-column: 1 / 3; display: flex; background: #f0f0f0; padding-right: 10px; }
.sb { width: 10px; height: 10px; border: 1px solid #bbb; border-radius: 1px; background: #f6f6f6; display: grid; place-items: center; }
.sb::before { content: ""; border: 2px solid transparent; }
.up::before { border-bottom: 3px solid #000; border-top: 0; }
.down::before { border-top: 3px solid #000; border-bottom: 0; }
.left::before { border-right: 3px solid #000; border-left: 0; }
.right::before { border-left: 3px solid #000; border-right: 0; }
.thumb { border: 1px solid #bbb; background: #f8f8f8; }
.gap { flex: 1; }
.vbar .thumb { height: 15px; }
.world .vbar .thumb { flex: 1; }
.hbar .thumb { width: 199px; display: grid; place-items: center; }
.hbar .thumb::before { content: ""; width: 12px; height: 6px; background: repeating-linear-gradient(#f8f8f8 0 1px, transparent 1px 2px), repeating-linear-gradient(90deg, #bbb 0 1px, transparent 1px 2px); }
.world .hbar .thumb { width: 220px; }

/* region page */
.compass { display: grid; align-items: center; flex: none; }
.compass .field { padding-left: 1px; }
.north { height: 24px; padding-left: 119px; grid-template-columns: 16px 64px; }
.west { height: 16px; padding-left: 18px; grid-template-columns: 15px 73px 126px 72px; }
.west > span:nth-of-type(2) { padding-left: 110px; }
.south { height: 28px; padding-left: 120px; grid-template-columns: 16px 65px; }
.gc { margin: 1px 0 0 14px; width: 291px; height: 21px; display: flex; align-items: center; gap: 3px; padding-left: 2px; }
.wide { width: 85px; margin-right: 2px; }
.gc .combo { width: 144px; }
.gc .btn:last-child { width: 46px; }
.map { width: 221px; height: 110px; margin: 3px 0 0 51px; flex: none; display: block; }
.shade { mix-blend-mode: soft-light; }
.nc { margin: 4px 0 0 18px; width: 286px; height: 56px; padding-left: 3px; }

/* mapset page */
.mapset { height: 20px; padding-left: 18px; display: flex; align-items: center; gap: 3px; }
.mapset .field { width: 236px; }
.rule { width: 286px; margin: 6px 0 0 18px; border-top: 1px solid #ccc; }
.nd { margin: 10px 0 0 18px; width: 286px; height: 61px; padding-left: 3px; }

/* summary page */
.summary { height: 23px; padding-left: 18px; display: flex; align-items: center; }
.heading + .summary { margin-top: 3px; }

.remark { position: absolute; left: 687px; top: 387px; margin: 0; display: flex; font: 17.500px/20px Lato, "Noto Sans CJK JP", sans-serif; color: #000; }
.latin { flex: none; width: 32px; font-size: 17px; transform: scaleX(.76); transform-origin: 0 0; }

/* toolbars */
.qgis { position: absolute; left: 424px; top: 508px; width: 744px; height: 245px; display: flex; flex-direction: column; background: #efefef; }
.bar { display: grid; align-items: center; justify-items: center; flex: none; }
.bar1 { height: 57px; padding-bottom: 4px; border-bottom: 2px solid #c2c2c2; margin-bottom: 2px;
  grid-template-columns: 31px 54px 54px 56px 52px 38px 26px 84px 6px 58px 58px 52px 52px 58px 65px; }
.bar2 { height: 58px; grid-template-columns: 14px 52px 56px 42px 10px 54px 56px 54px 4px 58px 50px 60px 48px 64px 44px 64px; border-bottom: 2px solid #c5c5c5; }
.ic { width: 40px; height: 40px; display: block; overflow: visible; }
.cut { width: auto; justify-self: start; }
.grip { width: 10px; height: 48px; }
.more { width: 14px; height: 12px; margin: 2px 0 0 2px; }
.end { justify-self: end; margin: 3px 5px 0 0; }
.vsep { width: 1.500px; height: 47px; background: #bdbdbd; }
.green { color: #5e9367; }
.grey { color: #8d8d8d; }
.steel { color: #3a6284; }
.faded { color: #b5b5b5; }
.gold { color: #c9a00a; }
.blades { color: #5e9367; }
.active { width: 53px; height: 50px; border: 1px solid #8c8c8c; border-radius: 3px; background: linear-gradient(#f2f2f2, #fff); display: grid; place-items: center; }
.info { font: italic bold 24px "Liberation Serif", serif; fill: #fff; }
.bookq { font: 26px "Liberation Serif", serif; fill: #fff; }
.bigq { font: bold 38px "Liberation Serif", serif; fill: #000; }
.view { flex: 1; margin-top: 2px; background: #fff; border-top: 2px solid #bdbdbd; border-right: 2px solid #bdbdbd; border-top-right-radius: 4px; }

.overlay { position: absolute; left: 0; top: 0; width: 1441px; height: 805px; pointer-events: none; }
.tooltip { position: absolute; left: 833px; top: 642px; width: 187px; height: 34px; border: 2px solid #000; background: #ffffe1; padding: 1px 0 0 2px; font: 18.500px/20px "Liberation Sans", "Noto Sans CJK JP", sans-serif; color: #000; box-shadow: 4px 4px 4px rgba(0,0,0,.55); }
```
FILE: fit.js
```js
// Tracks each label so that it fills its designed width.
document.querySelectorAll('.t[data-w]').forEach(function (el) {
  var range = document.createRange();
  range.selectNodeContents(el);
  var natural = range.getBoundingClientRect().width;
  var count = el.textContent.length;
  el.style.letterSpacing = ((el.dataset.w - natural) / count).toFixed(3) + 'px';
});
```
